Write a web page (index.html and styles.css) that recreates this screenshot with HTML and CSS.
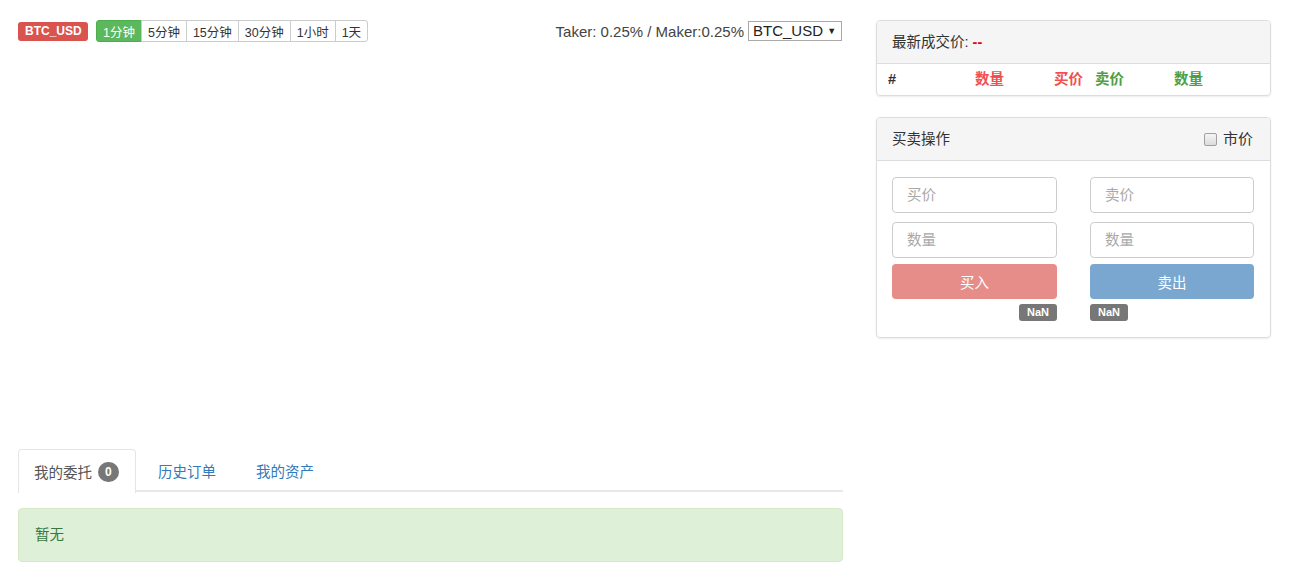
FILE: index.html
```html
<!DOCTYPE html>
<html lang="zh">
<head>
  <meta charset="UTF-8" />
  <title>BTC_USD</title>
  <link rel="stylesheet" href="styles.css">
</head>
<body>
  <div class="page">
    <div class="main">
      <div class="toolbar">
        <span class="label label-danger">BTC_USD</span>
        <div class="btn-group">
          <button class="btn-xs active">1分钟</button>
          <button class="btn-xs">5分钟</button>
          <button class="btn-xs">15分钟</button>
          <button class="btn-xs">30分钟</button>
          <button class="btn-xs">1小时</button>
          <button class="btn-xs">1天</button>
        </div>
        <div class="fee">
          <span>Taker: 0.25% / Maker:0.25%</span>
          <span class="market-select">BTC_USD <i>▼</i></span>
        </div>
      </div>

      <div class="chart"></div>

      <ul class="nav-tabs">
        <li class="active"><a>我的委托 <span class="badge">0</span></a></li>
        <li><a>历史订单</a></li>
        <li><a>我的资产</a></li>
      </ul>
      <div class="alert">暂无</div>
    </div>

    <div class="side">
      <div class="panel">
        <div class="panel-heading">最新成交价: <span class="last">--</span></div>
        <div class="depth-head">
          <span class="c1">#</span>
          <span class="c2 red">数量</span>
          <span class="c3 red">买价</span>
          <span class="c4 green">卖价</span>
          <span class="c5 green">数量</span>
        </div>
      </div>

      <div class="panel">
        <div class="panel-heading heading-flex">
          <span>买卖操作</span>
          <label class="market"><span class="check"></span>市价</label>
        </div>
        <div class="panel-body trade">
          <div class="trade-col">
            <div class="form-control">买价</div>
            <div class="form-control">数量</div>
            <button class="btn btn-buy">买入</button>
            <div class="nan right"><span class="label label-default">NaN</span></div>
          </div>
          <div class="trade-col">
            <div class="form-control">卖价</div>
            <div class="form-control">数量</div>
            <button class="btn btn-sell">卖出</button>
            <div class="nan"><span class="label label-default">NaN</span></div>
          </div>
        </div>
      </div>
    </div>
  </div>
</body>
</html>
```

FILE: styles.css
```css
body {
  margin: 0;
  font-family: 'Liberation Sans', 'Noto Sans CJK SC', sans-serif;
  font-size: 15px;
  color: #333;
  background: #fff;
}
.page {
  display: flex;
  gap: 33px;
  padding: 20px 0 0 18px;
}
.main {
  width: 825px;
}
.side {
  width: 395px;
}
.toolbar {
  display: flex;
  align-items: center;
  height: 22px;
}
.label {
  display: inline-block;
  font-weight: bold;
  color: #fff;
  border-radius: 3px;
  line-height: 1;
  text-align: center;
}
.label-danger {
  background: #d9534f;
  font-size: 12px;
  padding: 3px 7px 4px;
  width: 56px;
}
.btn-group {
  display: flex;
  margin-left: 8px;
}
.btn-xs {
  font-family: inherit;
  font-size: 12.5px;
  height: 22px;
  padding: 0 6px;
  background: #fff;
  color: #333;
  border: 1px solid #ccc;
  margin-left: -1px;
  cursor: pointer;
}
.btn-xs:first-child {
  border-radius: 3px 0 0 3px;
  margin-left: 0;
}
.btn-xs:last-child {
  border-radius: 0 3px 3px 0;
}
.btn-xs.active {
  background: #5cb85c;
  border-color: #4cae4c;
  color: #fff;
}
.fee {
  margin-left: auto;
  display: flex;
  align-items: center;
  gap: 4px;
  color: #444;
}
.market-select {
  border: 1px solid #a9a9a9;
  height: 18px;
  line-height: 18px;
  padding: 0 4px;
  color: #222;
  width: 84px;
  margin-right: 1px;
}
.market-select i {
  font-style: normal;
  font-size: 9px;
  vertical-align: 2px;
}
.chart {
  height: 407px;
}
.nav-tabs {
  list-style: none;
  margin: 0;
  padding: 0;
  display: flex;
  border-bottom: 2px solid #e8e8e8;
  height: 41px;
}
.nav-tabs li {
  margin-bottom: -2px;
  margin-right: 5px;
}
.nav-tabs a {
  display: flex;
  align-items: center;
  gap: 6px;
  height: 41px;
  padding: 0 16px 0 15px;
  border: 1px solid transparent;
  border-bottom: none;
  color: #337ab7;
  font-size: 14.5px;
}
.nav-tabs li + li a {
  padding: 0 17px 0 16px;
}
.nav-tabs .active a {
  color: #555;
  background: #fff;
  border-color: #e5e5e5;
  border-radius: 4px 4px 0 0;
  height: 43px;
}
.badge {
  display: inline-block;
  background: #777;
  color: #fff;
  font-size: 12px;
  font-weight: bold;
  border-radius: 10px;
  min-width: 7px;
  padding: 4px 7px;
  line-height: 1;
}
.alert {
  margin-top: 16px;
  background: #dff0d8;
  border: 1px solid #d6e9c6;
  border-radius: 4px;
  color: #3c763d;
  padding: 0 16px;
  height: 52px;
  line-height: 52px;
  font-size: 14.5px;
}
.panel {
  border: 1px solid #ddd;
  border-radius: 4px;
  box-shadow: 0 1px 2px rgba(0, 0, 0, 0.08);
  margin-bottom: 21px;
  overflow: hidden;
}
.panel-heading {
  background: #f5f5f5;
  border-bottom: 1px solid #ddd;
  height: 42px;
  line-height: 42px;
  padding: 0 15px;
  font-size: 14.5px;
}
.last {
  color: #e00;
  font-weight: bold;
}
.depth-head {
  display: flex;
  height: 31px;
  line-height: 30px;
  padding-left: 11px;
  font-weight: bold;
  font-size: 14.5px;
}
.c1 { width: 87px; }
.c2 { width: 79px; }
.c3 { width: 41px; }
.c4 { width: 79px; }
.red { color: #f0504f; }
.green { color: #4ea043; }
.heading-flex {
  display: flex;
  justify-content: space-between;
}
.market {
  display: flex;
  align-items: center;
  gap: 6px;
  font-size: 15px;
  padding-right: 2px;
}
.check {
  width: 11px;
  height: 11px;
  margin-left: 2px;
  border: 1px solid #a0a0a0;
  border-radius: 2px;
  background: linear-gradient(#f4f4f4, #dcdcdc);
}
.trade {
  display: grid;
  grid-template-columns: 165px 164px;
  gap: 33px;
  padding: 16px 15px 16px;
}
.trade-col {
  display: flex;
  flex-direction: column;
}
.form-control {
  height: 34px;
  border: 1px solid #ccc;
  border-radius: 4px;
  box-sizing: content-box;
  line-height: 34px;
  padding: 0 14px;
  color: #a9a9a9;
  font-size: 14.5px;
  margin-bottom: 9px;
}
.form-control + .form-control {
  margin-bottom: 6px;
}
.btn {
  font-family: inherit;
  height: 35px;
  border: 1px solid transparent;
  border-radius: 4px;
  color: #fff;
  font-size: 14.5px;
  cursor: not-allowed;
}
.btn-buy {
  background: #e68d8a;
}
.btn-sell {
  background: #79a7cf;
}
.nan {
  display: flex;
  margin-top: 5px;
}
.nan.right {
  justify-content: flex-end;
}
.label-default {
  background: #777;
  font-size: 11px;
  padding: 3px 8px;
}
```
